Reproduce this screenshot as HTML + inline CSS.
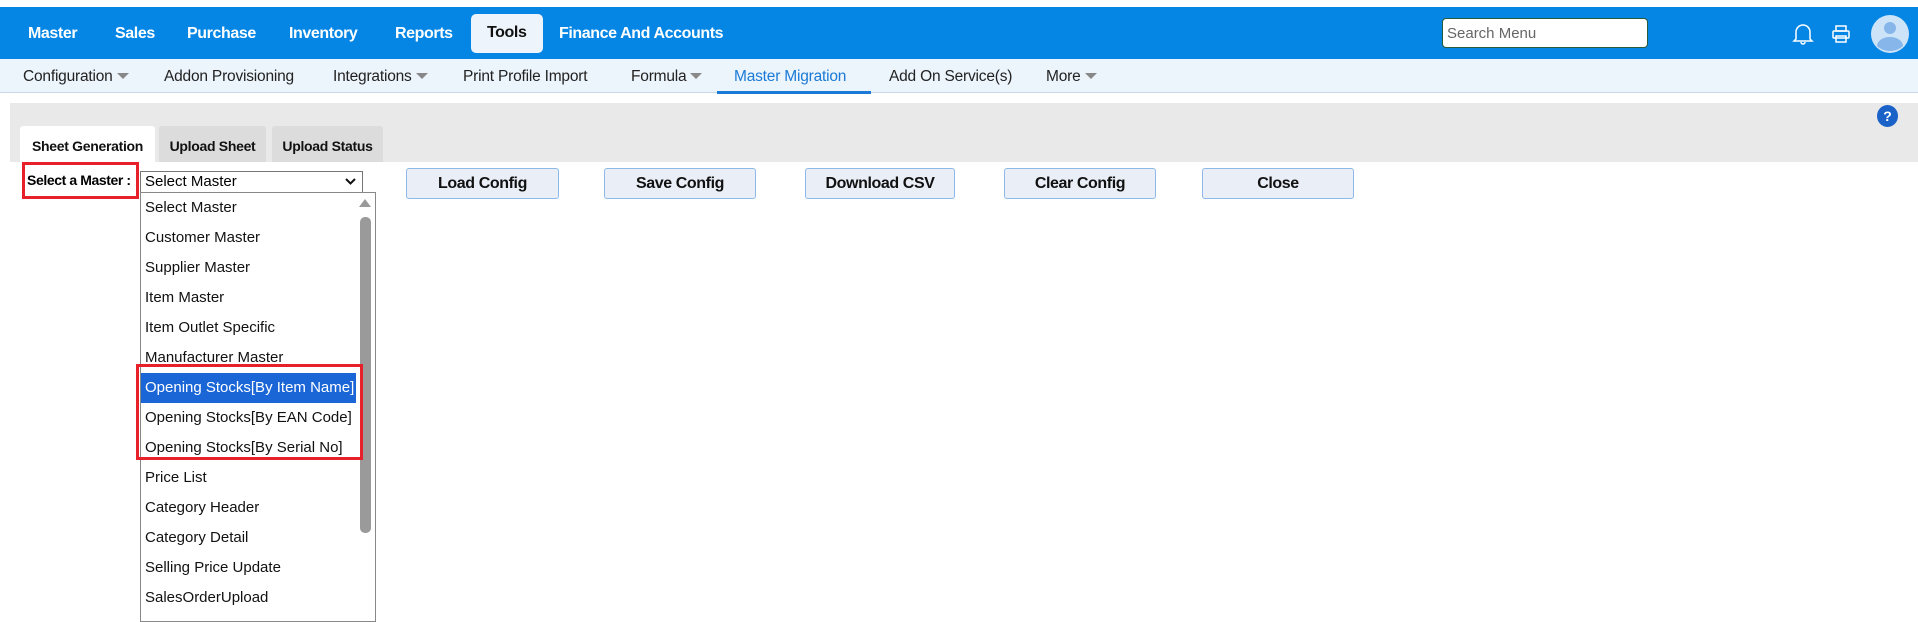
<!DOCTYPE html>
<html><head><style>
*{margin:0;padding:0;box-sizing:border-box}
body{width:1918px;height:617px;overflow:hidden;background:#fff;font-family:"Liberation Sans",Arial,sans-serif;position:relative}
.a{position:absolute}
#top{left:0;top:7px;width:1918px;height:52px;background:#0586e4}
.n{position:absolute;top:17px;color:#fff;font-weight:bold;font-size:16px;letter-spacing:-0.4px;line-height:34px}
#sub{left:0;top:59px;width:1918px;height:34px;background:#ecf4fc;border-bottom:1px solid #c8d8e8}
.s{position:absolute;top:66px;font-size:15.5px;color:#222;letter-spacing:-0.2px;line-height:22px}
.c{display:inline-block;width:0;height:0;border-left:6px solid transparent;border-right:6px solid transparent;border-top:6px solid #888;margin-left:4px;vertical-align:2px}
.tab{position:absolute;top:126px;height:36px;background:#dcdcdc;font-weight:bold;font-size:14px;letter-spacing:-0.3px;text-align:center;line-height:40px;border-radius:3px 3px 0 0;color:#111}
.b{position:absolute;top:168px;height:31px;background:#e9eef7;border:1px solid #8eb8ea;border-radius:3px;font-weight:bold;font-size:16px;letter-spacing:-0.4px;text-align:center;line-height:30px;color:#111}
.it{position:absolute;left:145px;font-size:15px;color:#111;line-height:30px;height:30px}
</style></head><body>
<div class="a" id="top"></div>
<div class="n" style="left:28px">Master</div>
<div class="n" style="left:115px">Sales</div>
<div class="n" style="left:187px">Purchase</div>
<div class="n" style="left:289px">Inventory</div>
<div class="n" style="left:395px">Reports</div>
<div class="a" style="left:471px;top:14px;width:72px;height:39px;background:#eef4fb;border-radius:5px"></div>
<div class="n" style="left:487px;top:16px;color:#111">Tools</div>
<div class="n" style="left:559px">Finance And Accounts</div>
<div class="a" style="left:1442px;top:18px;width:206px;height:30px;background:#fff;border:1px solid #2a5a3a;border-radius:4px;font-size:15px;color:#666;padding:6px 0 0 4px">Search Menu</div>
<svg class="a" style="left:1792px;top:22px" width="22" height="24" viewBox="0 0 22 24"><path d="M4 17V10a7 7 0 0 1 14 0v7l2 2H2z M9 20a2 2 0 0 0 4 0" fill="none" stroke="#fff" stroke-width="1.5"/></svg>
<svg class="a" style="left:1831px;top:24px" width="20" height="20" viewBox="0 0 20 20"><rect x="5" y="2" width="10" height="5" fill="none" stroke="#fff" stroke-width="1.5"/><rect x="2" y="7" width="16" height="7" rx="1" fill="none" stroke="#fff" stroke-width="1.5"/><rect x="5" y="12" width="10" height="6" fill="none" stroke="#fff" stroke-width="1.5"/></svg>
<svg class="a" style="left:1871px;top:15px" width="38" height="38" viewBox="0 0 38 38"><circle cx="19" cy="19" r="19" fill="#cde4f8"/><circle cx="19" cy="13" r="6" fill="#86b6ea"/><path d="M6 31a13 9 0 0 1 26 0a19 19 0 0 1-26 0z" fill="#86b6ea"/></svg>
<div class="a" id="sub"></div>
<div class="s" style="left:23px">Configuration<span class="c"></span></div>
<div class="s" style="left:164px">Addon Provisioning</div>
<div class="s" style="left:333px">Integrations<span class="c"></span></div>
<div class="s" style="left:463px">Print Profile Import</div>
<div class="s" style="left:631px">Formula<span class="c"></span></div>
<div class="s" style="left:734px;color:#1a7ad6">Master Migration</div>
<div class="a" style="left:717px;top:91px;width:154px;height:3px;background:#1a7ad6"></div>
<div class="s" style="left:889px">Add On Service(s)</div>
<div class="s" style="left:1046px">More<span class="c"></span></div>
<div class="a" style="left:10px;top:103px;width:1908px;height:59px;background:#e9e9e9"></div>
<div class="a" style="left:1877px;top:105px;width:21px;height:22px;border-radius:50%;background:#1a62c8;color:#fff;font-weight:bold;font-size:14px;text-align:center;line-height:22px">?</div>
<div class="tab" style="left:20px;width:135px;background:#fff">Sheet Generation</div>
<div class="tab" style="left:159px;width:107px">Upload Sheet</div>
<div class="tab" style="left:272px;width:111px">Upload Status</div>
<div class="a" style="left:22px;top:162px;width:117px;height:37px;border:3px solid #e8202a"></div>
<div class="a" style="left:27px;top:172px;font-size:14px;font-weight:bold;letter-spacing:-0.4px">Select a Master :</div>
<div class="a" style="left:140px;top:171px;width:223px;height:22px;border:1px solid #777;font-size:15px;padding:0 4px;line-height:19px">Select Master<svg style="position:absolute;right:6px;top:6px" width="11" height="8"><path d="M1 1l4.5 4.5L10 1" fill="none" stroke="#111" stroke-width="2"/></svg></div>
<div class="a" style="left:140px;top:192px;width:236px;height:430px;border:1px solid #888;background:#fff"></div>
<div class="a" style="left:360px;top:217px;width:11px;height:316px;background:#9a9a9a;border-radius:5px"></div>
<div class="a" style="left:359px;top:199px;width:0;height:0;border-left:6px solid transparent;border-right:6px solid transparent;border-bottom:8px solid #999"></div>
<div class="a" style="left:141px;top:373px;width:215px;height:30px;background:#1a66d6"></div>
<div class="it" style="top:193px">Select Master</div>
<div class="it" style="top:223px">Customer Master</div>
<div class="it" style="top:253px">Supplier Master</div>
<div class="it" style="top:283px">Item Master</div>
<div class="it" style="top:313px">Item Outlet Specific</div>
<div class="it" style="top:343px">Manufacturer Master</div>
<div class="it" style="top:373px;color:#fff">Opening Stocks[By Item Name]</div>
<div class="it" style="top:403px">Opening Stocks[By EAN Code]</div>
<div class="it" style="top:433px">Opening Stocks[By Serial No]</div>
<div class="it" style="top:463px">Price List</div>
<div class="it" style="top:493px">Category Header</div>
<div class="it" style="top:523px">Category Detail</div>
<div class="it" style="top:553px">Selling Price Update</div>
<div class="it" style="top:583px">SalesOrderUpload</div>
<div class="a" style="left:136px;top:364px;width:227px;height:96px;border:3px solid #e8202a"></div>
<div class="b" style="left:406px;width:153px">Load Config</div>
<div class="b" style="left:604px;width:152px">Save Config</div>
<div class="b" style="left:805px;width:150px">Download CSV</div>
<div class="b" style="left:1004px;width:152px">Clear Config</div>
<div class="b" style="left:1202px;width:152px">Close</div>
</body></html>
